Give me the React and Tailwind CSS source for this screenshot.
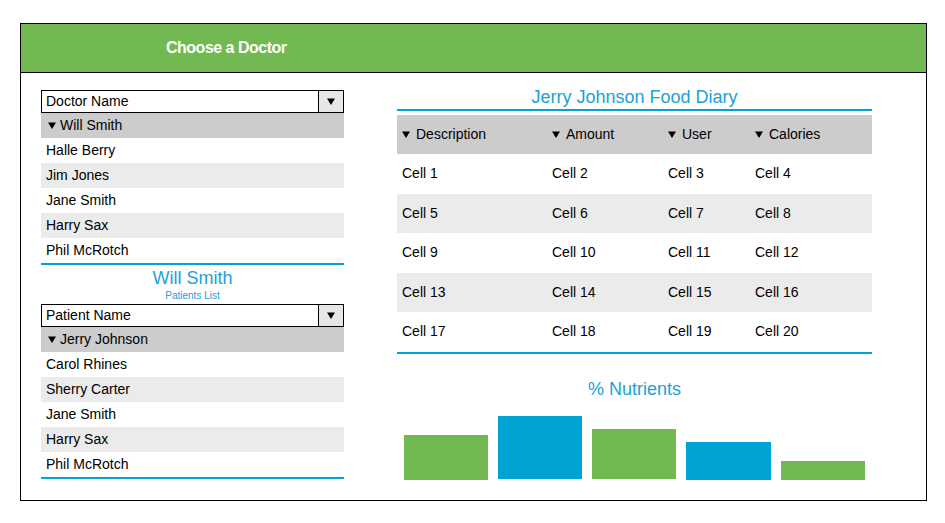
import React from "react";

const Tri = () => (
  <svg width="8" height="7" viewBox="0 0 8 7" className="shrink-0">
    <path d="M0 0.5h8L4 7z" fill="#000" />
  </svg>
);

function Select({ label }) {
  return (
    <div className="flex h-[23px] border border-black bg-white">
      <div className="flex flex-1 items-center pl-[4px] text-[14px] text-black">{label}</div>
      <div className="flex w-[25px] items-center justify-center border-l border-black bg-[#e6e6e6]">
        <Tri />
      </div>
    </div>
  );
}

function List({ selected, items }) {
  return (
    <div>
      <div className="flex h-[25px] items-center gap-[4px] bg-[#cccccc] pl-[7px] text-[14px]">
        <Tri />
        <span>{selected}</span>
      </div>
      {items.map((it, i) => (
        <div
          key={it}
          className={`flex h-[25px] items-center pl-[5px] text-[14px] ${i % 2 === 1 ? "bg-[#ebebeb]" : "bg-white"}`}
        >
          {it}
        </div>
      ))}
      <div className="h-[2px] bg-[#00a3d3]" />
    </div>
  );
}

const rows = [
  ["Cell 1", "Cell 2", "Cell 3", "Cell 4"],
  ["Cell 5", "Cell 6", "Cell 7", "Cell 8"],
  ["Cell 9", "Cell 10", "Cell 11", "Cell 12"],
  ["Cell 13", "Cell 14", "Cell 15", "Cell 16"],
  ["Cell 17", "Cell 18", "Cell 19", "Cell 20"],
];

const bars = [
  { h: 45, c: "bg-[#72b952]", mb: "mb-0", w: "w-[84px]" },
  { h: 63, c: "bg-[#00a3d2]", mb: "mb-[1px]", w: "w-[84px]" },
  { h: 50, c: "bg-[#72b952]", mb: "mb-[1px]", w: "w-[84px]" },
  { h: 38, c: "bg-[#00a3d2]", mb: "mb-0", w: "w-[85px]" },
  { h: 19, c: "bg-[#72b952]", mb: "mb-0", w: "w-[84px]" },
];

export default function App() {
  return (
    <div className="min-h-[523px] bg-white pt-[23px] font-['Liberation_Sans',Arial,sans-serif] text-black">
      <div className="ml-[20px] h-[478px] w-[907px] border border-black">
        <div className="flex h-[49px] items-center border-b border-black bg-[#72b952] pl-[145px]">
          <span className="text-[16px] font-bold tracking-[-0.5px] text-white">Choose a Doctor</span>
        </div>
        <div className="flex">
          <div className="ml-[20px] w-[303px] pt-[17px]">
            <Select label="Doctor Name" />
            <List selected="Will Smith" items={["Halle Berry", "Jim Jones", "Jane Smith", "Harry Sax", "Phil McRotch"]} />
            <div className="pt-[2px] text-center text-[#1ba1d6]">
              <div className="text-[18px] leading-[22px]">Will Smith</div>
              <div className="mb-[2px] mt-[1px] text-[10px] leading-[12px]">Patients List</div>
            </div>
            <Select label="Patient Name" />
            <List selected="Jerry Johnson" items={["Carol Rhines", "Sherry Carter", "Jane Smith", "Harry Sax", "Phil McRotch"]} />
          </div>
          <div className="ml-[53px] w-[475px] pt-[13px]">
            <div className="mb-[1px] text-center text-[18px] leading-[22px] text-[#1ba1d6]">Jerry Johnson Food Diary</div>
            <div className="h-[2px] bg-[#00a3d3]" />
            <div className="mt-[4px] grid h-[39px] grid-cols-[150px_116px_87px_1fr] items-center bg-[#cccccc] px-[5px] text-[14px]">
              {["Description", "Amount", "User", "Calories"].map((h) => (
                <div key={h} className="flex items-center gap-[6px]">
                  <Tri />
                  <span>{h}</span>
                </div>
              ))}
            </div>
            {rows.map((r, i) => (
              <div
                key={i}
                className={`grid h-[39.5px] grid-cols-[150px_116px_87px_1fr] items-center px-[5px] text-[14px] ${i % 2 === 1 ? "bg-[#ebebeb]" : "bg-white"}`}
              >
                {r.map((c) => (
                  <div key={c}>{c}</div>
                ))}
              </div>
            ))}
            <div className="h-[2px] bg-[#00a3d3]" />
            <div className="mt-[24px] text-center text-[18px] leading-[22px] text-[#1ba1d6]">% Nutrients</div>
            <div className="mt-[16px] flex h-[64px] items-end gap-[10px] pl-[7px]">
              {bars.map((b, i) => (
                <div key={i} className={`${b.w} ${b.c} ${b.mb}`} style={{ height: b.h }} />
              ))}
            </div>
          </div>
        </div>
      </div>
    </div>
  );
}
